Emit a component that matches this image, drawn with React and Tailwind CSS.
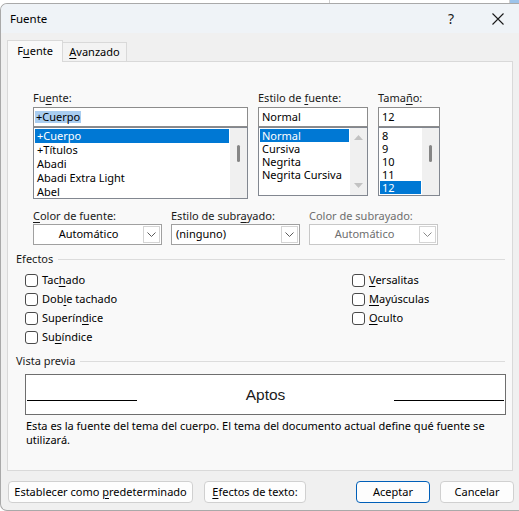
import React from 'react';

// Diálogo "Fuente" de Word, recreado con Tailwind
const FONT = "font-['Noto_Sans',sans-serif]";

function U({ children }) {
  return <span className="underline decoration-1 underline-offset-[2px]">{children}</span>;
}

function Chevron({ color = '#5a5a5a' }) {
  return (
    <svg width="9" height="5" viewBox="0 0 9 5" fill="none">
      <path d="M0.5 0.5 L4.5 4.5 L8.5 0.5" stroke={color} strokeWidth="1" />
    </svg>
  );
}

function Dropdown({ value, w, center, disabled }) {
  return (
    <div className={`${w} h-[21px] border ${disabled ? 'border-[#c8c8c8]' : 'border-[#a0a0a0]'} bg-white flex`}>
      <div
        className={`flex-1 flex items-center text-[11px] whitespace-nowrap ${center ? 'justify-center' : 'pl-[4px]'} ${disabled ? 'text-[#6e6e6e]' : 'text-black'}`}
      >
        {value}
      </div>
      <div className="w-[17px] my-px mr-px border border-[#d4d4d4] flex items-center justify-center">
        <Chevron color={disabled ? '#8a8a8a' : '#5a5a5a'} />
      </div>
    </div>
  );
}

function Check({ children }) {
  return (
    <div className="h-[19px] flex items-center gap-[4px]">
      <div className="w-[13px] h-[13px] rounded-[3px] border border-[#4a4a4a] bg-white" />
      <span className="text-[11px] text-black whitespace-nowrap">{children}</span>
    </div>
  );
}

function Legend({ label }) {
  return (
    <div className="h-[18px] flex items-center pl-[8px] pr-[7px] gap-[5px]">
      <span className="text-[11px] text-[#1a1a1a]">{label}</span>
      <div className="flex-1 h-px bg-[#dcdcdc]" />
    </div>
  );
}

function Thumb() {
  return (
    <div className="w-[17px] bg-[#f0f0f0] pt-[17px] flex justify-center">
      <div className="w-[3px] h-[17px] bg-[#868686] rounded-full" />
    </div>
  );
}

function Button({ children, w, primary }) {
  return (
    <div
      className={`${w} h-[22px] rounded-[4px] border ${primary ? 'border-[#005fb8]' : 'border-[#d0d0d0]'} bg-[#fdfdfd] flex items-center justify-center text-[11px] text-black whitespace-nowrap`}
    >
      <span>{children}</span>
    </div>
  );
}

export default function App() {
  const fonts = ['+Cuerpo', '+Títulos', 'Abadi', 'Abadi Extra Light', 'Abel'];
  const styles = ['Normal', 'Cursiva', 'Negrita', 'Negrita Cursiva'];
  const sizes = ['8', '9', '10', '11', '12'];

  return (
    <div className={`w-[519px] h-[511px] bg-white overflow-hidden ${FONT}`}>
      {/* lo que se ve detrás de la ventana */}
      <div className="h-[3px] flex">
        <div className="w-[330px] border-r border-[#d0d0d0]" />
        <div className="w-[180px] border-r border-[#d0d0d0]" />
        <div className="flex-1 bg-[#9cc3ea]" />
      </div>

      <div className="h-[508px] border-l border-t border-b border-[#a9a9a9] rounded-tl-[7px] rounded-bl-[7px] bg-[#f0f0f0] flex flex-col overflow-hidden">
        {/* barra de título */}
        <div className="h-[29px] bg-[#eff3f7] flex items-center pl-[9px] shrink-0">
          <span className="text-[11.5px] text-black">Fuente</span>
          <span className="ml-auto mr-[38px] text-[14px] text-[#1a1a1a]">?</span>
          <svg className="mr-[15px]" width="12" height="12" viewBox="0 0 12 12">
            <path d="M0.5 0.5 L11.5 11.5 M11.5 0.5 L0.5 11.5" stroke="#1a1a1a" strokeWidth="1.1" />
          </svg>
        </div>

        {/* pestañas */}
        <div className="h-[28px] flex items-end pl-[6px] shrink-0">
          <div className="relative z-10 -mb-px w-[56px] h-[22px] bg-[#f9f9f9] border border-b-0 border-[#d9d9d9] flex items-center justify-center text-[11px] text-black">
            <span>
              F<U>u</U>ente
            </span>
          </div>
          <div className="w-[64px] h-[19px] bg-[#f3f3f3] border border-l-0 border-b-0 border-[#d9d9d9] flex items-center justify-center text-[11px] text-black">
            <span>
              <U>A</U>vanzado
            </span>
          </div>
        </div>

        {/* panel */}
        <div className="ml-[6px] w-[506px] h-[410px] border border-[#d9d9d9] bg-[#f9f9f9] flex flex-col shrink-0">
          {/* listas de fuente */}
          <div className="mt-[27px] pl-[25px] flex gap-[10px]">
            <div className="w-[215px]">
              <div className="h-[18px] text-[11px] text-[#1a1a1a] leading-[17px]">
                Fu<U>e</U>nte:
              </div>
              <div className="h-[20px] border border-[#8c8c8c] bg-white flex items-center pl-px">
                <span className="bg-[#a9cdf0] text-[11px] text-black leading-[12px] px-px">+Cuerpo</span>
              </div>
              <div className="h-[72px] border border-[#828790] bg-white flex">
                <div className="flex-1 p-px">
                  {fonts.map((f, i) => (
                    <div
                      key={f}
                      className={`h-[14px] leading-[14px] pl-[2px] text-[11px] whitespace-nowrap ${i === 0 ? 'bg-[#0078d4] text-white' : 'text-black'}`}
                    >
                      {f}
                    </div>
                  ))}
                </div>
                <Thumb />
              </div>
            </div>

            <div className="w-[110px]">
              <div className="h-[18px] text-[11px] text-[#1a1a1a] leading-[17px]">
                Estilo de <U>f</U>uente:
              </div>
              <div className="h-[20px] border border-[#8c8c8c] bg-white flex items-center pl-[3px] text-[11px] text-black">
                Normal
              </div>
              <div className="h-[69px] border border-[#828790] bg-white flex">
                <div className="flex-1 p-px">
                  {styles.map((s, i) => (
                    <div
                      key={s}
                      className={`h-[13px] leading-[13px] pl-[2px] text-[11px] whitespace-nowrap ${i === 0 ? 'bg-[#0078d4] text-white' : 'text-black'}`}
                    >
                      {s}
                    </div>
                  ))}
                </div>
                <div className="w-[17px] bg-[#f0f0f0] flex flex-col items-center justify-between py-[7px]">
                  <svg width="9" height="5" viewBox="0 0 9 5">
                    <path d="M0 5 L4.5 0 L9 5 Z" fill="#c2c2c2" />
                  </svg>
                  <svg width="9" height="5" viewBox="0 0 9 5">
                    <path d="M0 0 L4.5 5 L9 0 Z" fill="#c2c2c2" />
                  </svg>
                </div>
              </div>
            </div>

            <div className="w-[62px]">
              <div className="h-[18px] text-[11px] text-[#1a1a1a] leading-[17px]">
                Tama<U>ñ</U>o:
              </div>
              <div className="h-[20px] border border-[#8c8c8c] bg-white flex items-center pl-[3px] text-[11px] text-black">
                12
              </div>
              <div className="h-[69px] border border-[#828790] bg-white flex overflow-hidden">
                <div className="flex-1 p-px">
                  {sizes.map((s, i) => (
                    <div
                      key={s}
                      className={`h-[13px] leading-[13px] pl-[2px] text-[11px] ${i === 4 ? 'bg-[#0078d4] text-white' : 'text-black'}`}
                    >
                      {s}
                    </div>
                  ))}
                </div>
                <Thumb />
              </div>
            </div>
          </div>

          {/* colores y subrayado */}
          <div className="mt-[8px] pl-[25px] flex gap-[9px]">
            <div>
              <div className="h-[17px] text-[11px] text-[#1a1a1a] leading-[17px]">
                <U>C</U>olor de fuente:
              </div>
              <Dropdown value="Automático" w="w-[129px]" center />
            </div>
            <div>
              <div className="h-[17px] text-[11px] text-[#1a1a1a] leading-[17px]">
                Estilo de subr<U>a</U>yado:
              </div>
              <Dropdown value="(ninguno)" w="w-[129px]" />
            </div>
            <div>
              <div className="h-[17px] text-[11px] text-[#6e6e6e] leading-[17px]">Color de subrayado:</div>
              <Dropdown value="Automático" w="w-[129px]" center disabled />
            </div>
          </div>

          {/* efectos */}
          <div className="mt-[5px]">
            <Legend label="Efectos" />
            <div className="mt-[3px] pl-[17px] flex">
              <div className="w-[327px]">
                <Check>
                  Tac<U>h</U>ado
                </Check>
                <Check>
                  Dob<U>l</U>e tachado
                </Check>
                <Check>
                  Superín<U>d</U>ice
                </Check>
                <Check>
                  Su<U>b</U>índice
                </Check>
              </div>
              <div>
                <Check>
                  <U>V</U>ersalitas
                </Check>
                <Check>
                  <U>M</U>ayúsculas
                </Check>
                <Check>
                  <U>O</U>culto
                </Check>
              </div>
            </div>
          </div>

          {/* vista previa */}
          <div className="mt-[5px]">
            <Legend label="Vista previa" />
            <div className="mt-[4px] ml-[17px] mr-[6px] h-[41px] border border-[#6e6e6e] bg-white flex px-px">
              <div className="w-[110px] h-[26px] border-b border-black" />
              <div className="flex-1 text-center text-[15.5px] text-[#1a1a1a] font-['Liberation_Sans',sans-serif] leading-[20px] mt-[10px]">
                Aptos
              </div>
              <div className="w-[110px] h-[26px] border-b border-black" />
            </div>
            <div className="mt-[4px] ml-[18px] mr-[10px] text-[11px] leading-[14px] text-black">
              Esta es la fuente del tema del cuerpo. El tema del documento actual define qué fuente se utilizará.
            </div>
          </div>
        </div>

        {/* botones */}
        <div className="mt-[10px] pl-[7px] flex">
          <Button w="w-[185px]">
            Establecer como <U>p</U>redeterminado
          </Button>
          <div className="ml-[11px]">
            <Button w="w-[102px]">
              <U>E</U>fectos de texto:
            </Button>
          </div>
          <div className="ml-[50px]">
            <Button w="w-[74px]" primary>
              Aceptar
            </Button>
          </div>
          <div className="ml-[10px]">
            <Button w="w-[74px]">Cancelar</Button>
          </div>
        </div>
      </div>
    </div>
  );
}
